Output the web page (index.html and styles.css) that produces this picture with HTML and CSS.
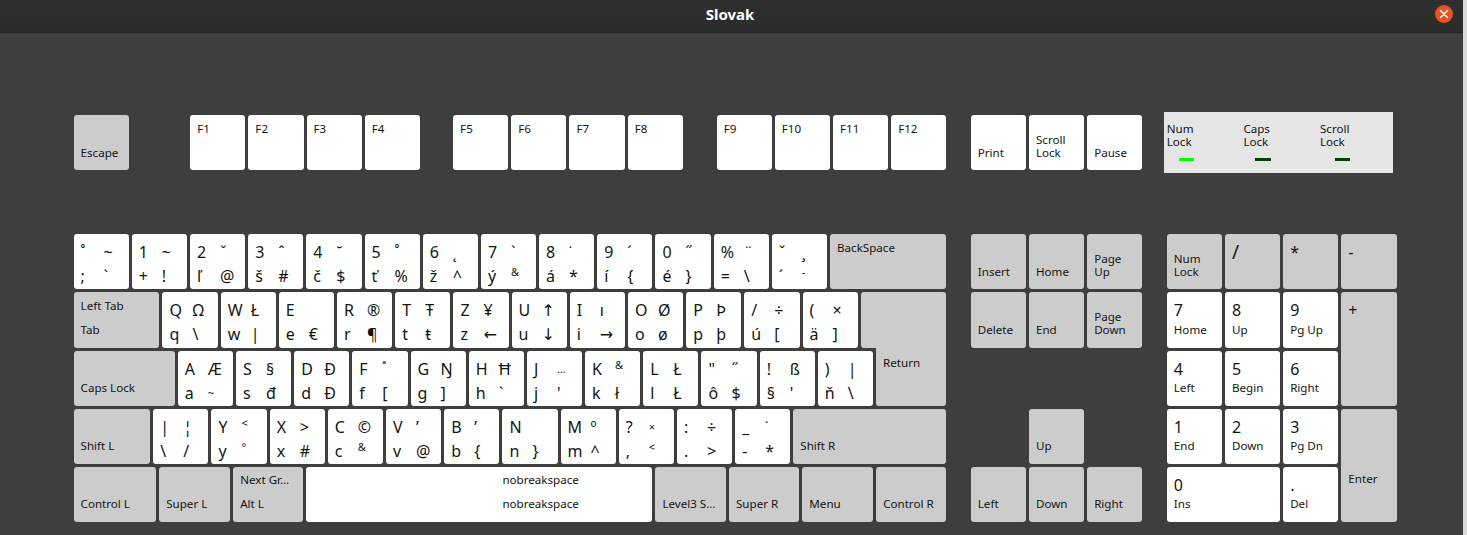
FILE: index.html
```html
<!DOCTYPE html>
<html lang="en">
<head>
  <meta charset="UTF-8" />
  <title>Slovak</title>
  <link rel="stylesheet" href="styles.css">
</head>
<body>
  <div class="window">
    <header class="titlebar">
      <span class="title">Slovak</span>
      <span class="close">
        <svg width="10" height="10" viewBox="0 0 10 10"><path d="M1.5 1.5l7 7M8.5 1.5l-7 7" stroke="#fff" stroke-width="1.5" stroke-linecap="round"/></svg>
      </span>
    </header>

    <div class="board">
      <!-- Function row -->
      <div class="block-row top">
        <div class="main">
          <div class="row">
            <div class="key mod">Escape</div>
            <div class="key lab up start-f1">F1</div>
            <div class="key lab up">F2</div>
            <div class="key lab up">F3</div>
            <div class="key lab up">F4</div>
            <div class="key lab up start-f5">F5</div>
            <div class="key lab up">F6</div>
            <div class="key lab up">F7</div>
            <div class="key lab up">F8</div>
            <div class="key lab up start-f9">F9</div>
            <div class="key lab up">F10</div>
            <div class="key lab up">F11</div>
            <div class="key lab up">F12</div>
          </div>
        </div>
        <div class="nav">
          <div class="key lab">Print</div>
          <div class="key lab">Scroll<br>Lock</div>
          <div class="key lab">Pause</div>
        </div>
        <div class="leds">
          <div class="led-cell">
            <div class="led-name">Num<br>Lock</div>
            <div class="led on"></div>
          </div>
          <div class="led-cell">
            <div class="led-name">Caps<br>Lock</div>
            <div class="led"></div>
          </div>
          <div class="led-cell">
            <div class="led-name">Scroll<br>Lock</div>
            <div class="led last"></div>
          </div>
        </div>
      </div>

      <div class="block-row">
        <div class="main">
          <div class="row">
            <div class="key glyphs"><span>˚</span><span>~</span><span>;</span><span>`</span></div>
            <div class="key glyphs"><span>1</span><span>~</span><span>+</span><span>!</span></div>
            <div class="key glyphs"><span>2</span><span>ˇ</span><span>ľ</span><span>@</span></div>
            <div class="key glyphs"><span>3</span><span>ˆ</span><span>š</span><span>#</span></div>
            <div class="key glyphs"><span>4</span><span>˘</span><span>č</span><span>$</span></div>
            <div class="key glyphs"><span>5</span><span>˚</span><span>ť</span><span>%</span></div>
            <div class="key glyphs"><span>6</span><span>˛</span><span>ž</span><span>^</span></div>
            <div class="key glyphs"><span>7</span><span>`</span><span>ý</span><span class="hi">&amp;</span></div>
            <div class="key glyphs"><span>8</span><span>˙</span><span>á</span><span>*</span></div>
            <div class="key glyphs"><span>9</span><span>´</span><span>í</span><span>{</span></div>
            <div class="key glyphs"><span>0</span><span>˝</span><span>é</span><span>}</span></div>
            <div class="key glyphs"><span>%</span><span>¨</span><span>=</span><span>\</span></div>
            <div class="key glyphs"><span>ˇ</span><span>¸</span><span>´</span><span class="hi">-</span></div>
            <div class="key mod up wide">BackSpace</div>
          </div>
          <div class="row">
            <div class="key mod pair w-tab"><span>Left Tab</span><span>Tab</span></div>
            <div class="key glyphs"><span>Q</span><span>Ω</span><span>q</span><span>\</span></div>
            <div class="key glyphs"><span>W</span><span>Ł</span><span>w</span><span>|</span></div>
            <div class="key glyphs"><span>E</span><span></span><span>e</span><span>€</span></div>
            <div class="key glyphs"><span>R</span><span>®</span><span>r</span><span>¶</span></div>
            <div class="key glyphs"><span>T</span><span>Ŧ</span><span>t</span><span>ŧ</span></div>
            <div class="key glyphs"><span>Z</span><span>¥</span><span>z</span><span>←</span></div>
            <div class="key glyphs"><span>U</span><span>↑</span><span>u</span><span>↓</span></div>
            <div class="key glyphs"><span>I</span><span>ı</span><span>i</span><span>→</span></div>
            <div class="key glyphs"><span>O</span><span>Ø</span><span>o</span><span>ø</span></div>
            <div class="key glyphs"><span>P</span><span>Þ</span><span>p</span><span>þ</span></div>
            <div class="key glyphs"><span>/</span><span>÷</span><span>ú</span><span>[</span></div>
            <div class="key glyphs"><span>(</span><span>×</span><span>ä</span><span>]</span></div>
            <div class="key mod wide return-top"></div>
          </div>
          <div class="row">
            <div class="key mod w-caps">Caps Lock</div>
            <div class="key glyphs"><span>A</span><span>Æ</span><span>a</span><span class="sm">~</span></div>
            <div class="key glyphs"><span>S</span><span>§</span><span>s</span><span>đ</span></div>
            <div class="key glyphs"><span>D</span><span>Ð</span><span>d</span><span>Đ</span></div>
            <div class="key glyphs"><span>F</span><span class="hi">ª</span><span>f</span><span>[</span></div>
            <div class="key glyphs"><span>G</span><span>Ŋ</span><span>g</span><span>]</span></div>
            <div class="key glyphs"><span>H</span><span>Ħ</span><span>h</span><span>`</span></div>
            <div class="key glyphs"><span>J</span><span class="sm">…</span><span>j</span><span>'</span></div>
            <div class="key glyphs"><span>K</span><span class="hi">&amp;</span><span>k</span><span>ł</span></div>
            <div class="key glyphs"><span>L</span><span>Ł</span><span>l</span><span>Ł</span></div>
            <div class="key glyphs"><span>"</span><span>˝</span><span>ô</span><span>$</span></div>
            <div class="key glyphs"><span>!</span><span>ß</span><span>§</span><span>'</span></div>
            <div class="key glyphs"><span>)</span><span>|</span><span>ň</span><span>\</span></div>
            <div class="key mod wide return-bottom">Return</div>
          </div>
          <div class="row">
            <div class="key mod w-shift">Shift L</div>
            <div class="key glyphs"><span>|</span><span>¦</span><span>\</span><span>/</span></div>
            <div class="key glyphs"><span>Y</span><span class="hi">&lt;</span><span>y</span><span class="hi">°</span></div>
            <div class="key glyphs"><span>X</span><span>&gt;</span><span>x</span><span>#</span></div>
            <div class="key glyphs"><span>C</span><span>©</span><span>c</span><span class="hi">&amp;</span></div>
            <div class="key glyphs"><span>V</span><span>ʼ</span><span>v</span><span>@</span></div>
            <div class="key glyphs"><span>B</span><span>ʼ</span><span>b</span><span>{</span></div>
            <div class="key glyphs"><span>N</span><span></span><span>n</span><span>}</span></div>
            <div class="key glyphs"><span>M</span><span>º</span><span>m</span><span>^</span></div>
            <div class="key glyphs"><span>?</span><span class="sm">×</span><span>,</span><span class="hi">&lt;</span></div>
            <div class="key glyphs"><span>:</span><span>÷</span><span>.</span><span>&gt;</span></div>
            <div class="key glyphs"><span>_</span><span>˙</span><span>-</span><span>*</span></div>
            <div class="key mod wide">Shift R</div>
          </div>
          <div class="row last-row">
            <div class="key mod w-ctrl">Control L</div>
            <div class="key mod w-super">Super L</div>
            <div class="key mod pair w-alt"><span>Next Gr…</span><span>Alt L</span></div>
            <div class="key lab pair w-space"><span>nobreakspace</span><span>nobreakspace</span></div>
            <div class="key mod w-level">Level3 S…</div>
            <div class="key mod w-superr">Super R</div>
            <div class="key mod w-menu">Menu</div>
            <div class="key mod wide">Control R</div>
          </div>
        </div>

        <div class="nav nav-grid">
          <div class="key mod">Insert</div>
          <div class="key mod">Home</div>
          <div class="key mod">Page<br>Up</div>
          <div class="key mod">Delete</div>
          <div class="key mod">End</div>
          <div class="key mod">Page<br>Down</div>
          <div class="key mod arrow-up">Up</div>
          <div class="key mod arrow-row">Left</div>
          <div class="key mod arrow-row">Down</div>
          <div class="key mod arrow-row">Right</div>
        </div>

        <div class="numpad">
          <div class="key mod">Num<br>Lock</div>
          <div class="key mod big slash">/</div>
          <div class="key mod big">*</div>
          <div class="key mod big">-</div>
          <div class="key num"><b>7</b><span>Home</span></div>
          <div class="key num"><b>8</b><span>Up</span></div>
          <div class="key num"><b>9</b><span>Pg Up</span></div>
          <div class="key mod big tall">+</div>
          <div class="key num"><b>4</b><span>Left</span></div>
          <div class="key num"><b>5</b><span>Begin</span></div>
          <div class="key num"><b>6</b><span>Right</span></div>
          <div class="key num"><b>1</b><span>End</span></div>
          <div class="key num"><b>2</b><span>Down</span></div>
          <div class="key num"><b>3</b><span>Pg Dn</span></div>
          <div class="key mod tall enter">Enter</div>
          <div class="key num zero low"><b>0</b><span>Ins</span></div>
          <div class="key num low"><b>.</b><span>Del</span></div>
        </div>
      </div>
    </div>
  </div>
</body>
</html>
```

FILE: styles.css
```css
* {
  box-sizing: border-box;
}
body {
  margin: 0;
  height: 535px;
  overflow: hidden;
  background: linear-gradient(90deg, #bcbcc0, #dadada);
  color: #141414;
  font-family: "Noto Sans", "DejaVu Sans", sans-serif;
  font-size: 11.6px;
  line-height: 13px;
}
.window {
  width: 1463px;
  height: 535px;
  background: #3e3e3e;
}
.titlebar {
  position: relative;
  height: 33px;
  background: linear-gradient(#2f2f2f, #2b2b2b);
  border-bottom: 1px solid #242424;
  display: flex;
  align-items: center;
  justify-content: center;
  padding: 0 3px 4px 0;
}
.title {
  color: #fff;
  font-weight: 700;
  font-size: 15px;
}
.close {
  position: absolute;
  right: 10px;
  top: 5px;
  width: 18px;
  height: 18px;
  border-radius: 50%;
  background: #e95420;
  display: flex;
  align-items: center;
  justify-content: center;
}
.board {
  padding: 82px 0 0 73.6px;
}
.block-row {
  display: flex;
  align-items: flex-start;
}
.block-row.top {
  height: 119.2px;
}
.main {
  width: 872.4px;
  display: flex;
  flex-direction: column;
  gap: 3px;
}
.row {
  display: flex;
  gap: 3px;
  height: 55.2px;
}
.key {
  flex: none;
  width: 55.2px;
  height: 55.2px;
  border-radius: 3px;
  background: #fff;
  padding: 6.5px 4px 11.5px 7px;
  display: flex;
  flex-direction: column;
  justify-content: flex-end;
  white-space: nowrap;
}
.last-row .key,
.arrow-row,
.low {
  padding-bottom: 12.5px;
}
.mod {
  background: #cccccc;
}
.up {
  justify-content: flex-start;
}
.pair {
  justify-content: space-between;
}
.wide {
  flex: 1;
  width: auto;
}
.start-f1 {
  margin-left: 58.4px;
}
.start-f5 {
  margin-left: 30.2px;
}
.start-f9 {
  margin-left: 30.8px;
}

/* letter keys: four glyphs in a 2x2 grid */
.glyphs {
  display: grid;
  grid-template-columns: 23px 1fr;
  grid-template-rows: 24px 24px;
  padding: 6px 0 0 7px;
  font-size: 16px;
  line-height: 24px;
  align-content: start;
}
.sm {
  font-size: 11px;
}
.hi {
  font-size: 11px;
  line-height: 16px;
}

.w-tab { width: 85.9px; }
.w-caps { width: 101.2px; }
.w-shift { width: 76.7px; }
.w-ctrl { width: 82.6px; }
.w-super { width: 71px; }
.w-alt { width: 70.2px; }
.w-space { width: 346px; padding-left: 196px; }
.w-level { width: 70.6px; }
.w-superr { width: 70.4px; }
.w-menu { width: 70.8px; }

.return-top {
  border-radius: 3px 3px 0 3px;
}
.return-bottom {
  margin-top: -3px;
  height: 58.2px;
  justify-content: flex-start;
  padding-top: 8.5px;
  border-radius: 0 0 3px 3px;
}

.nav {
  margin-left: 24.8px;
  width: 171px;
  display: flex;
  gap: 3px;
}
.nav-grid {
  display: grid;
  grid-template-columns: repeat(3, 55.2px);
  grid-auto-rows: 55.2px;
  gap: 3px;
}
.arrow-up {
  grid-column: 2;
  grid-row: 4;
}
.arrow-row {
  grid-row: 5;
}
.numpad {
  margin-left: 25px;
  display: grid;
  grid-template-columns: repeat(4, 55.2px);
  grid-auto-rows: 55.2px;
  gap: 3px;
}
.num {
  justify-content: space-between;
  padding-top: 6px;
}
.num b {
  font-weight: 400;
  font-size: 16px;
  line-height: 24px;
  height: 24px;
}
.big {
  justify-content: flex-start;
  font-size: 16px;
  line-height: 24px;
  padding-top: 6px;
}
.slash {
  font-size: 19px;
}
.tall {
  grid-row: span 2;
  height: auto;
}
.enter {
  justify-content: flex-start;
  padding-top: 63px;
}
.zero {
  grid-column: span 2;
  width: auto;
}

.leds {
  margin: -3px 0 0 22px;
  width: 229px;
  height: 61px;
  padding: 10px 0 0 3px;
  background: #e5e5e5;
  display: flex;
}
.led-cell {
  flex: none;
  width: 76.6px;
}
.led {
  width: 15.5px;
  height: 3px;
  margin: 10px 0 0 12px;
  background: #004400;
}
.led.on {
  background: #00ff00;
}
.led.last {
  margin-left: 15px;
}
```
